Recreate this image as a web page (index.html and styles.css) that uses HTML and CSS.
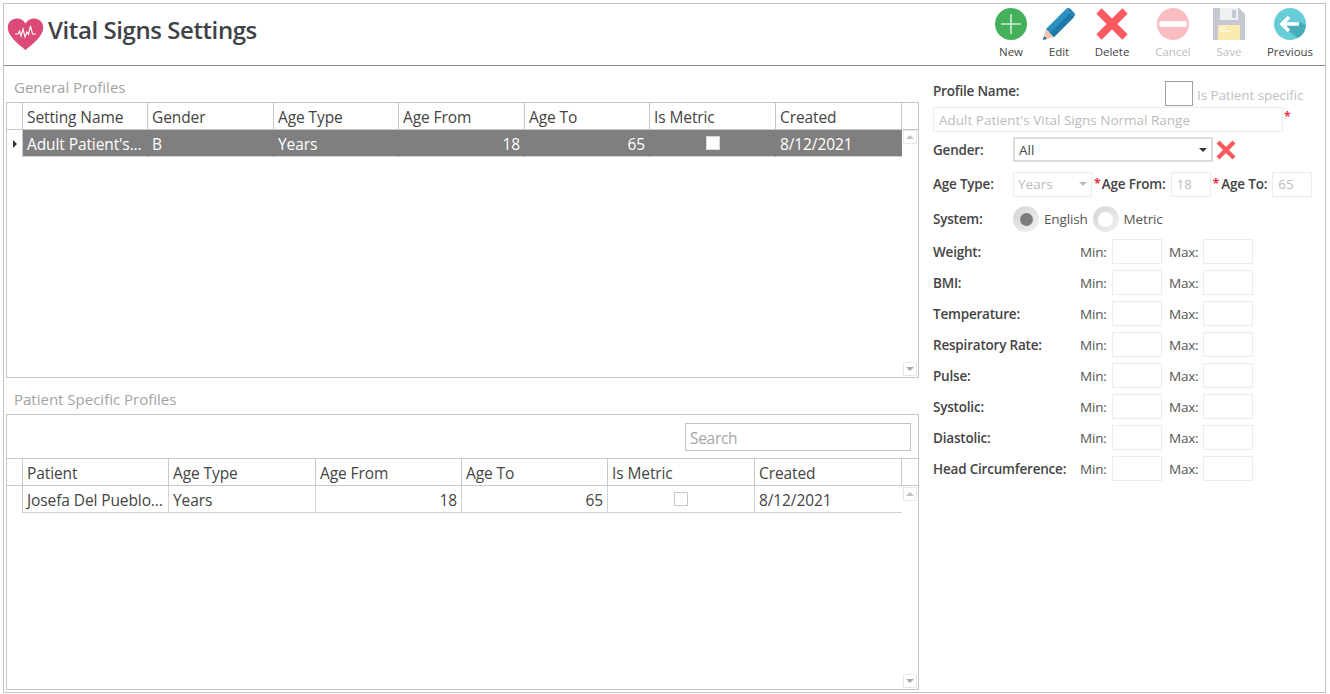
FILE: index.html
```html
<!DOCTYPE html>
<html lang="en">
<head>
<meta charset="utf-8">
<title>Vital Signs Settings</title>
<link rel="stylesheet" href="styles.css">
</head>
<body>
<div class="app">
  <header class="top">
    <div class="brand">
      <svg class="heart" width="37" height="33" viewBox="0 0 37 33"><path d="M18.5 32 C14 28 1 19 .8 10 C.6 4 5 .6 10 .6 C13.5 .6 16.5 2.5 18.5 5.5 C20.5 2.5 23.5 .6 27 .6 C32 .6 36.4 4 36.2 10 C36 19 23 28 18.5 32Z" fill="#dc4a78"/><path d="M8 16 L11 16 L12.5 13 L14 18 L16 11 L18 19 L20 14 L21.5 16.5 L23.5 8 L25.5 16 L29 16" fill="none" stroke="#fff" stroke-width="1.1"/></svg>
      <h1 class="title">Vital Signs Settings</h1>
    </div>
    <nav class="tools">
      <div class="tool w-new">
        <svg width="34" height="34" viewBox="0 0 34 34"><circle cx="17" cy="17" r="16" fill="#43b05c"/><path d="M17 7V27M7 17H27" stroke="#cdebd3" stroke-width="1.6"/></svg>
        <span>New</span>
      </div>
      <div class="tool w-edit">
        <svg width="34" height="34" viewBox="0 0 34 34"><path d="M1 33 L4 22 L12 30Z" fill="#f3c6ad"/><path d="M1 33 L2 29 L5 32Z" fill="#1f6f9e"/><path d="M4 22 L24 2 L32 10 L12 30Z" fill="#2a90c1"/><path d="M8 26 L28 6 L32 10 L12 30Z" fill="#1f78a8"/><path d="M24 2 Q26 .2 28 1.5 L32.5 6 Q34 8 32 10Z" fill="#2683b3"/></svg>
        <span>Edit</span>
      </div>
      <div class="tool w-del">
        <svg width="34" height="34" viewBox="0 0 34 34"><path d="M4 4L30 30M30 4L4 30" stroke="#fb5a5f" stroke-width="7.5"/></svg>
        <span>Delete</span>
      </div>
      <div class="tool w-cancel off">
        <svg width="34" height="34" viewBox="0 0 34 34"><circle cx="17" cy="17" r="16" fill="#f9bcc1"/><rect x="3" y="14" width="28" height="6" rx="3" fill="#fff"/></svg>
        <span>Cancel</span>
      </div>
      <div class="tool w-save off">
        <svg width="34" height="34" viewBox="0 0 34 34"><path d="M1 1H27L33 7V33H1Z" fill="#c5c8d1"/><path d="M8 1H26V13H8Z" fill="#eef0f3"/><rect x="20" y="3" width="4" height="8" fill="#c5c8d1"/><rect x="6" y="18" width="22" height="15" fill="#fbeab0"/><path d="M8 21H14M8 24H19" stroke="#fff" stroke-width="1.2"/></svg>
        <span>Save</span>
      </div>
      <div class="tool w-prev">
        <svg width="34" height="34" viewBox="0 0 34 34"><circle cx="17" cy="17" r="16" fill="#68cdd9"/><path d="M9 17 L17 25 L25 31 A16 16 0 0 0 33 18 L27 15Z" fill="#48adbb"/><path d="M9 17H26M16 10L9 17L16 24" fill="none" stroke="#fff" stroke-width="3.6"/></svg>
        <span>Previous</span>
      </div>
    </nav>
  </header>

  <main class="main">
    <section class="lists">
      <h2 class="cap">General Profiles</h2>
      <div class="box">
        <div class="grow cols-a head">
          <i class="stub"></i><b>Setting Name</b><b>Gender</b><b>Age Type</b><b>Age From</b><b>Age To</b><b>Is Metric</b><b>Created</b><i class="end"></i>
        </div>
        <div class="grow cols-a row sel">
          <i class="stub"><em class="mark"></em></i><span>Adult Patient's...</span><span>B</span><span>Years</span><span class="num">18</span><span class="num">65</span><span class="chk"><u class="tick on"></u></span><span>8/12/2021</span>
        </div>
        <div class="scroll"><s class="sb up"></s><s class="sb down"></s></div>
      </div>

      <h2 class="cap">Patient Specific Profiles</h2>
      <div class="box">
        <div class="searchbar"><input class="search" placeholder="Search"></div>
        <div class="grow cols-b head">
          <i class="stub"></i><b>Patient</b><b>Age Type</b><b>Age From</b><b>Age To</b><b>Is Metric</b><b>Created</b><i class="end"></i>
        </div>
        <div class="grow cols-b row">
          <i class="stub"></i><span>Josefa Del Pueblo...</span><span>Years</span><span class="num">18</span><span class="num">65</span><span class="chk"><u class="tick"></u></span><span>8/12/2021</span>
        </div>
        <div class="scroll second"><s class="sb up"></s><s class="sb down"></s></div>
      </div>
    </section>

    <aside class="form">
      <div class="f-name">
        <label class="lb">Profile Name:</label>
        <span class="patient"><i class="bigcheck"></i><span class="dim">Is Patient specific</span></span>
      </div>
      <div class="f-line f-prof">
        <input class="fld prof" value="Adult Patient's Vital Signs Normal Range" disabled><em class="star">*</em>
      </div>
      <div class="f-line f-gender">
        <label class="lb lead">Gender:</label>
        <div class="combo"><span>All</span><i class="caret"></i></div>
        <svg width="22" height="22" viewBox="0 0 22 22"><path d="M3 3L19 19M19 3L3 19" stroke="#fb5a5f" stroke-width="4.4"/></svg>
      </div>
      <div class="f-line f-age">
        <label class="lb lead">Age Type:</label>
        <div class="combo small"><span>Years</span><i class="caret pale"></i></div>
        <em class="star s1">*</em><label class="lb">Age From:</label><input class="fld age a1" value="18" disabled>
        <em class="star s2">*</em><label class="lb">Age To:</label><input class="fld age a2" value="65" disabled>
      </div>
      <div class="f-line f-sys">
        <label class="lb lead">System:</label>
        <span class="radio"><i class="dot"></i></span><span class="rtext">English</span>
        <span class="radio"><i class="hole"></i></span><span class="rtext">Metric</span>
      </div>
      <div class="ranges">
        <div class="rg"><label class="lb">Weight:</label><span>Min:</span><input class="fld mm"><span>Max:</span><input class="fld mm"></div>
        <div class="rg"><label class="lb">BMI:</label><span>Min:</span><input class="fld mm"><span>Max:</span><input class="fld mm"></div>
        <div class="rg"><label class="lb">Temperature:</label><span>Min:</span><input class="fld mm"><span>Max:</span><input class="fld mm"></div>
        <div class="rg"><label class="lb">Respiratory Rate:</label><span>Min:</span><input class="fld mm"><span>Max:</span><input class="fld mm"></div>
        <div class="rg"><label class="lb">Pulse:</label><span>Min:</span><input class="fld mm"><span>Max:</span><input class="fld mm"></div>
        <div class="rg"><label class="lb">Systolic:</label><span>Min:</span><input class="fld mm"><span>Max:</span><input class="fld mm"></div>
        <div class="rg"><label class="lb">Diastolic:</label><span>Min:</span><input class="fld mm"><span>Max:</span><input class="fld mm"></div>
        <div class="rg"><label class="lb">Head Circumference:</label><span>Min:</span><input class="fld mm"><span>Max:</span><input class="fld mm"></div>
      </div>
    </aside>
  </main>
</div>
</body>
</html>
```
FILE: styles.css
```css
* { box-sizing: border-box; }
html, body { margin: 0; padding: 0; background: #fff; }
body {
  padding: 3px 0 0 3px;
  font-family: "Open Sans", "Noto Sans", sans-serif;
  color: #444;
  overflow: hidden;
}
.app {
  width: 1323px;
  height: 690px;
  border: 1px solid #c4c4c4;
  display: flex;
  flex-direction: column;
}
.top {
  height: 62px;
  flex: none;
  border-bottom: 1px solid #8a8a8a;
  display: flex;
  justify-content: space-between;
}
.brand { display: flex; align-items: flex-start; padding: 14px 0 0 3px; gap: 4px; }
.title { margin: -1px 0 0; font-size: 24px; line-height: 26px; font-weight: 600; color: #3f4347; letter-spacing: -0.42px; }
.tools { display: flex; margin-right: -1px; }
.tool {
  display: flex; flex-direction: column; align-items: center;
  padding-top: 3px;
  font-size: 11.5px; line-height: 14px; color: #444;
}
.tool svg { display: block; margin-bottom: 4px; }
.tool.off { color: #bdbdbd; }
.w-new { width: 50px; }
.w-edit { width: 46px; }
.w-del { width: 60px; }
.w-cancel { width: 62px; }
.w-save { width: 50px; }
.w-prev { width: 72px; }

.main { flex: 1; display: flex; min-height: 0; }
.lists { width: 915px; flex: none; padding-left: 2px; }
.cap {
  margin: 0; height: 36px; padding: 12px 0 0 8px;
  font-size: 15px; line-height: 18px; font-weight: 400; color: #a3a3a3;
}
.box {
  position: relative;
  width: 913px; height: 276px;
  border: 1px solid #c4c4c4;
}
.grow { display: grid; height: 27px; border-bottom: 1px solid #c8c8c8; }
.cols-a { grid-template-columns: 16px 125px 126px 125px 126px 125px 126px 126px 16px; }
.cols-b { grid-template-columns: 16px 146px 147px 146px 146px 147px 147px 16px; }
.head b, .head i, .row span, .row i {
  font-weight: 400; font-style: normal;
  border-right: 1px solid #c8c8c8;
  font-size: 15.5px; line-height: 28px;
  padding: 0 4px;
  white-space: nowrap; overflow: hidden;
  color: #444;
}
.head i.end { border-right: 0; }
.head b { letter-spacing: -0.1px; }
.row { padding: 0; border-bottom: 0; }
.row .stub { border-bottom: 0; padding: 0; display: flex; align-items: center; justify-content: center; }
.row span { border-bottom: 1px solid #ccd3da; border-right-color: #ccd3da; letter-spacing: -0.1px; }
.row span:last-child { border-right: 0; }
.mark { width: 0; height: 0; border-left: 4px solid #333; border-top: 4px solid transparent; border-bottom: 4px solid transparent; }
.num { text-align: right; }
.chk { display: flex; align-items: center; justify-content: center; }
.tick { display: block; width: 14px; height: 14px; background: #fff; border: 1px solid #c8c8c8; margin-top: -1px; }
.tick.on { border-color: #d8d8d8; }
.sel span { background: #7f7f7f; color: #fff; border-right-color: #7f7f7f; border-bottom-color: #d4d4d4; }
.scroll {
  position: absolute; right: 0; top: 27px; bottom: 0; width: 16px;
  display: flex; flex-direction: column; justify-content: space-between;
  padding: 0 1px 1px 1px;
}
.scroll.second { top: 72px; }
.sb { display: flex; width: 14px; height: 14px; border: 1px solid #e8e8e8; align-items: center; justify-content: center; text-decoration: none; }
.sb::before { content: ""; width: 0; height: 0; border-left: 4px solid transparent; border-right: 4px solid transparent; }
.up::before { border-bottom: 4px solid #c0c0c0; }
.down::before { border-top: 4px solid #a8a8a8; }
.searchbar { height: 44px; display: flex; justify-content: flex-end; padding: 8px 7px 0 0; border-bottom: 1px solid #c8c8c8; }
.search {
  width: 226px; height: 28px; border: 1px solid #c4c4c4; outline: 0; padding: 1px 4px 0;
  font: 15.5px "Open Sans", "Noto Sans", sans-serif; letter-spacing: -0.3px; color: #444;
}
.search::placeholder { color: #a6a6a6; opacity: 1; }

.form { flex: 1; padding: 15px 0 0 14px; font-size: 13.5px; }
.lb { font-weight: 600; color: #444; white-space: nowrap; font-size: 13.5px; letter-spacing: -0.2px; line-height: 20px; }
.f-gender .lb, .rg .lb { padding-top: 1px; }
.f-name { height: 26px; display: flex; position: relative; }
.patient { position: absolute; left: 232px; top: 0; display: flex; align-items: center; gap: 4px; }
.bigcheck { width: 28px; height: 25px; border: 1px solid #a0a0a0; display: block; }
.dim { color: #c0c0c0; font-size: 13.5px; letter-spacing: -0.1px; margin-top: 2px; }
.f-line { display: flex; align-items: center; }
.fld {
  height: 25px; border: 1px solid #ececec; outline: 0; background: #fff; padding: 0 5px;
  font: 13.5px "Open Sans", "Noto Sans", sans-serif; color: #bcbcbc;
}
.fld:disabled { color: #bcbcbc; -webkit-text-fill-color: #bcbcbc; opacity: 1; }
.prof { width: 350px; }
.star { font-style: normal; color: #f03040; font-size: 12.5px; line-height: 1; font-weight: 700; }
.f-prof .star { margin: 0 0 4px 1px; }
.f-gender { margin-top: 5px; height: 25px; }
.lead { width: 80px; flex: none; }
.combo {
  width: 200px; height: 25px; border: 2px solid #dcdcdc; display: flex; align-items: center;
  justify-content: space-between; padding: 0 4px; font-size: 13.5px; color: #444;
}
.caret { width: 0; height: 0; border-left: 4px solid transparent; border-right: 4px solid transparent; border-top: 4px solid #333; }
.caret.pale { border-top-color: #bbb; }
.combo.small { width: 79px; border: 1px solid #ececec; color: #bcbcbc; }
.f-gender svg { margin-left: 2px; }
.f-age { margin-top: 9px; height: 26px; }
.s1 { margin: 0 1px 0 2px; }
.s2 { margin: 0 2px 0 2px; }
.age { width: 40px; }
.a1 { margin-left: 5px; }
.a2 { margin-left: 5px; }
.f-sys { margin-top: 9px; height: 26px; }
.radio {
  width: 26px; height: 26px; border-radius: 50%; flex: none;
  background: linear-gradient(135deg, #d4d4d4, #f2f2f2);
  display: flex; align-items: center; justify-content: center;
}
.dot { width: 13px; height: 13px; border-radius: 50%; background: #7c7c7c; }
.hole { width: 15px; height: 15px; border-radius: 50%; background: #fff; }
.rtext { margin: 0 5px 0 5px; font-size: 13.5px; color: #555; letter-spacing: -0.15px; }
.ranges { margin-top: 7px; display: flex; flex-direction: column; gap: 6px; }
.rg { display: grid; grid-template-columns: 146px 33px 50px 41px 50px; align-items: center; height: 25px; }
.rg span { color: #555; font-size: 13.5px; letter-spacing: -0.2px; }
.rg span:first-of-type { padding-left: 1px; }
.rg span:nth-of-type(2) { padding-left: 7px; }
.mm { width: 50px; }
```
